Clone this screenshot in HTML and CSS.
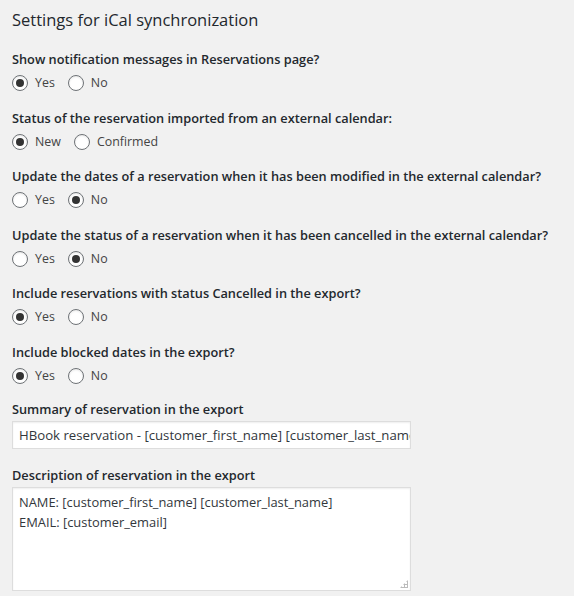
FILE: index.html
```html
<!DOCTYPE html>
<html>
<head>
<meta charset="utf-8">
<link rel="stylesheet" href="styles.css">
</head>
<body>
<div class="page">
  <h3 class="title">Settings for iCal synchronization</h3>

  <div class="group">
    <div class="label">Show notification messages in Reservations page?</div>
    <div class="choices">
      <label class="choice"><span class="radio checked"></span>Yes</label>
      <label class="choice"><span class="radio"></span>No</label>
    </div>
  </div>

  <div class="group">
    <div class="label">Status of the reservation imported from an external calendar:</div>
    <div class="choices">
      <label class="choice"><span class="radio checked"></span>New</label>
      <label class="choice"><span class="radio"></span>Confirmed</label>
    </div>
  </div>

  <div class="group">
    <div class="label">Update the dates of a reservation when it has been modified in the external calendar?</div>
    <div class="choices">
      <label class="choice"><span class="radio"></span>Yes</label>
      <label class="choice"><span class="radio checked"></span>No</label>
    </div>
  </div>

  <div class="group">
    <div class="label">Update the status of a reservation when it has been cancelled in the external calendar?</div>
    <div class="choices">
      <label class="choice"><span class="radio"></span>Yes</label>
      <label class="choice"><span class="radio checked"></span>No</label>
    </div>
  </div>

  <div class="group">
    <div class="label">Include reservations with status Cancelled in the export?</div>
    <div class="choices">
      <label class="choice"><span class="radio checked"></span>Yes</label>
      <label class="choice"><span class="radio"></span>No</label>
    </div>
  </div>

  <div class="group">
    <div class="label">Include blocked dates in the export?</div>
    <div class="choices">
      <label class="choice"><span class="radio checked"></span>Yes</label>
      <label class="choice"><span class="radio"></span>No</label>
    </div>
  </div>

  <div class="group field first-field">
    <div class="label">Summary of reservation in the export</div>
    <div class="input">HBook reservation - [customer_first_name] [customer_last_name]</div>
  </div>

  <div class="group field">
    <div class="label">Description of reservation in the export</div>
    <div class="textarea">NAME: [customer_first_name] [customer_last_name]<br>EMAIL: [customer_email]<span class="grip"></span></div>
  </div>
</div>
</body>
</html>
```

FILE: styles.css
```css
html, body {
  margin: 0;
  padding: 0;
  background: #f1f1f1;
}
body {
  font-family: "Open Sans", "Noto Sans", sans-serif;
  color: #23282d;
  font-size: 13px;
}
.page {
  padding: 9px 0 0 12px;
}
.title {
  margin: 0;
  font-size: 16.5px;
  font-weight: 400;
  line-height: 22px;
  height: 24px;
}
.group {
  margin-top: 16px;
}
.group + .group {
  margin-top: 14.5px;
}
.label {
  font-weight: 600;
  font-size: 12.75px;
  line-height: 20px;
  height: 20px;
  white-space: nowrap;
}
.choices {
  display: flex;
  gap: 13px;
  margin-top: 4px;
  height: 20px;
  align-items: center;
}
.choice {
  display: flex;
  align-items: center;
  gap: 7px;
  color: #444;
  font-size: 12.4px;
  line-height: 20px;
}
.radio {
  width: 14px;
  height: 14px;
  border: 1px solid #6e7276;
  border-radius: 50%;
  background: #fff;
  box-shadow: inset 0 1px 2px rgba(0,0,0,.1);
  display: flex;
  align-items: center;
  justify-content: center;
  box-sizing: content-box;
}
.radio.checked::before {
  content: "";
  width: 8px;
  height: 8px;
  border-radius: 50%;
  background: #333;
}
.field .label {
  margin-bottom: 2px;
}
.group.first-field {
  margin-top: 13.5px;
}
.group.field + .group.field {
  margin-top: 16px;
}
.input, .textarea {
  width: 399px;
  box-sizing: border-box;
  background: #fff;
  border: 1px solid #ddd;
  box-shadow: inset 0 1px 2px rgba(0,0,0,.07);
  font-size: 12.9px;
  color: #32373c;
  overflow: hidden;
  white-space: nowrap;
}
.input {
  height: 28px;
  line-height: 26px;
  padding: 0 6px;
  font-size: 13.2px;
}
.textarea {
  position: relative;
  height: 104px;
  line-height: 20px;
  padding: 4px 6px;
}
.grip {
  position: absolute;
  right: 2px;
  bottom: 2px;
  width: 8px;
  height: 8px;
  background:
    radial-gradient(circle, #bbb 1px, transparent 1.2px) 0 0 / 3px 3px;
  clip-path: polygon(100% 0, 100% 100%, 0 100%);
}
```
